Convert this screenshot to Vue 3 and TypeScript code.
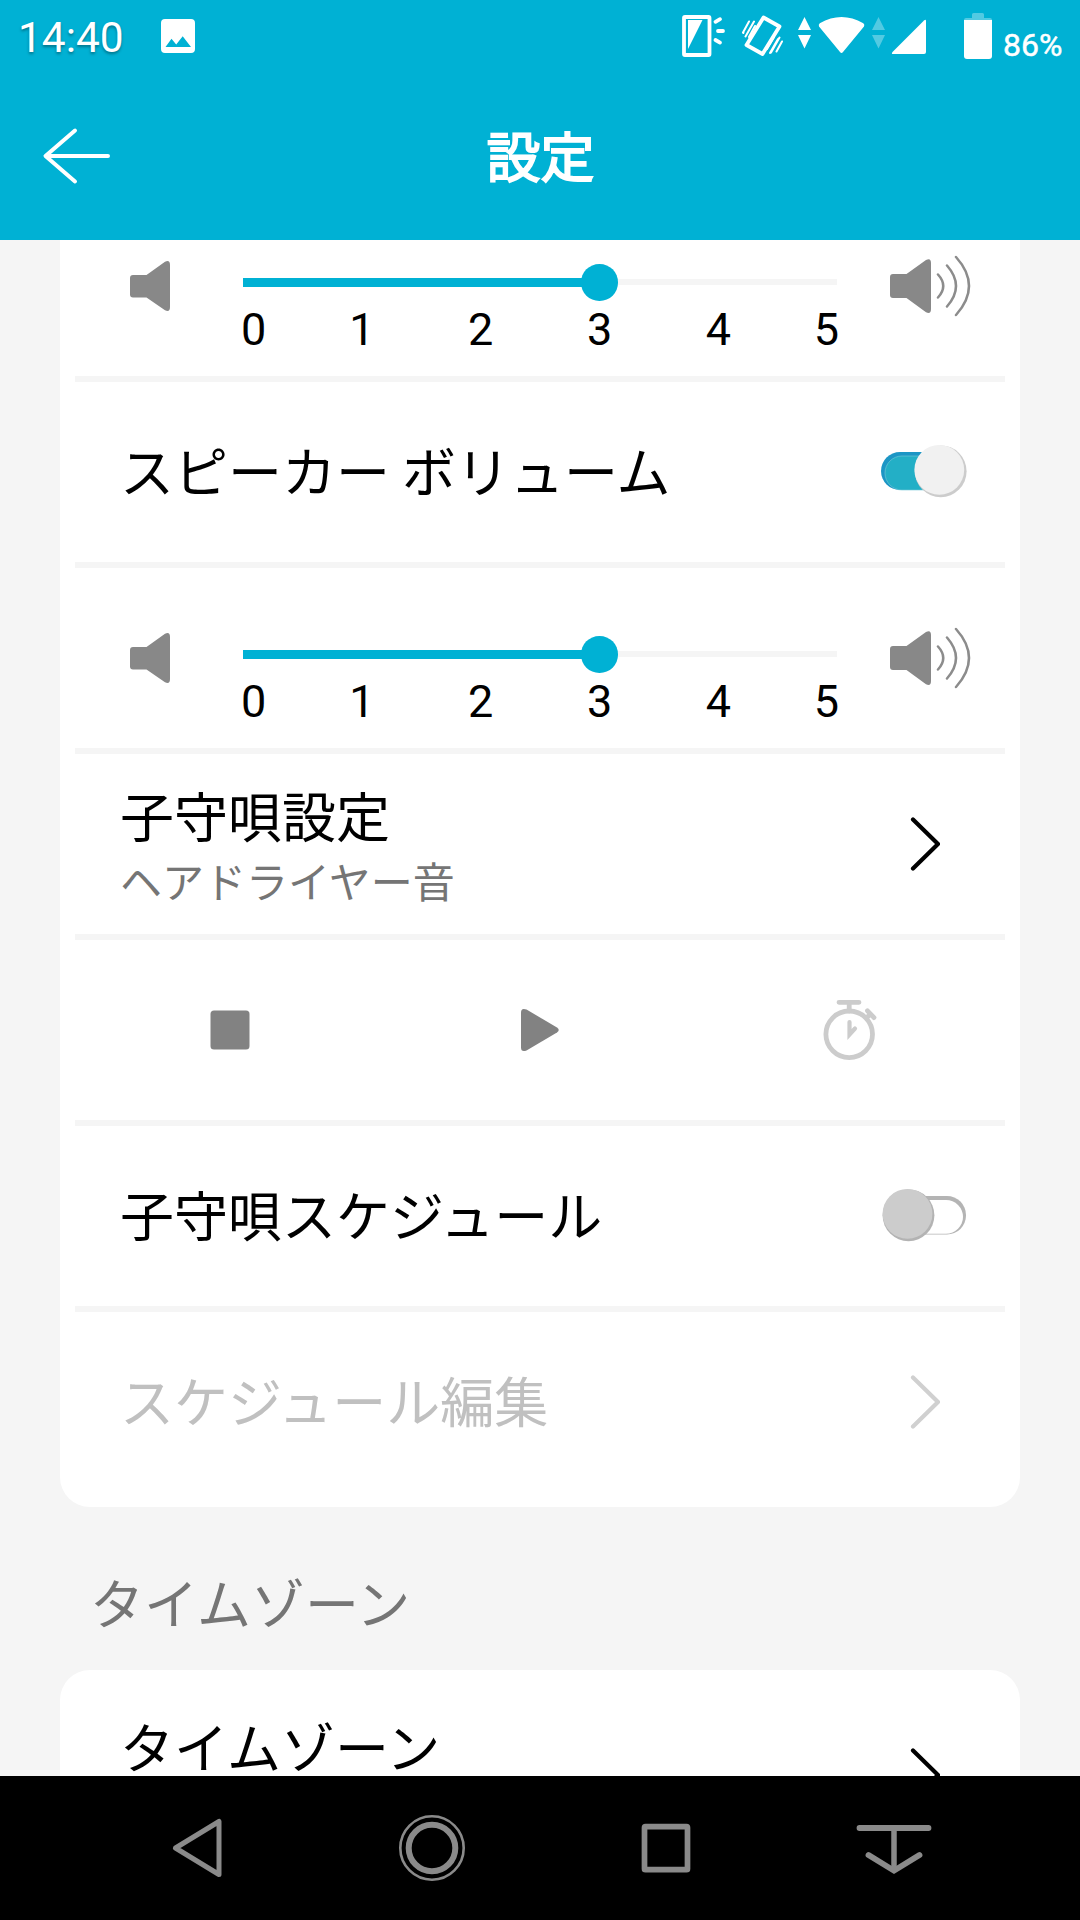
<script setup lang="ts">
import { ref } from 'vue'

const levels: number[] = [0, 1, 2, 3, 4, 5]
const cryVolume = ref<number>(3)
const speakerVolume = ref<number>(3)
const percent = (value: number): string => `${(value / 5) * 100}%`
</script>

<template>
  <div class="screen">
    <header class="top">
      <div class="status">
        <span class="clock">14:40</span>
        <svg class="photo" width="36" height="36" viewBox="160 18 36 36">
          <path fill="#fff" fill-rule="evenodd" d="M165 19h26q4 0 4 4v26q0 4-4 4h-26q-4 0-4-4V23q0-4 4-4zM165.500 47h25.500l-8.300-10.800-6.500 8.300-4.700-5.700z" />
        </svg>
        <svg class="indicators" width="320" height="60" viewBox="680 0 320 60" fill="#fff">
          <rect x="684" y="17" width="25.500" height="38" rx="1" fill="none" stroke="#fff" stroke-width="3.800" />
          <path d="M688 20h14.500L688 49z" />
          <path d="M715.500 21.800l4.500-2.600M718 31h5M715.500 40l4.500 2.600" fill="none" stroke="#fff" stroke-width="3.800" stroke-linecap="round" />
          <path d="M763.500 17.500L779.500 26.500 762.500 54 746.500 45z" fill="none" stroke="#fff" stroke-width="3.800" stroke-linejoin="round" />
          <path d="M743 32.500l6-11M745.500 36.500l8.500-15M771 52.500l8.500-15M776.500 51.500l5.500-10M743.300 33l.2-.4M770 53l8-14M749 37l6-11M767 49l7-12" fill="none" stroke="#fff" stroke-width="2" stroke-linecap="round" />
          <path d="M804.500 17l6.500 13h-13zM798 35h13l-6.500 13.500z" />
          <path d="M819.800 23.300Q841.500 10.800 863.300 23.300 865 24.500 864 26.500L843 52Q841.500 54 840 52L819 26.500Q818.200 24.500 819.800 23.300z" />
          <path opacity=".32" d="M878.500 17l6.500 13h-13zM872 35h13l-6.500 13.500z" />
          <path d="M924 20.500q2-1.500 2 .5v31q0 2-2 2h-31q-2 0-.5-2z" />
          <path opacity=".32" d="M972 18v-3.500q0-1.500 1.500-1.500h9q1.500 0 1.500 1.500V18h6q2 0 2 2h-28q0-2 2-2z" />
          <path d="M964 20h28v36q0 3-3 3h-22q-3 0-3-3z" />
        </svg>
        <span class="charge">86%</span>
      </div>
      <div class="bar">
        <svg class="back" width="76" height="60" viewBox="40 126 76 60" fill="none" stroke="#fff" stroke-width="4" stroke-linecap="round" stroke-linejoin="round">
          <path d="M75 130.500L45.500 156 75 181.500M46 156h62" />
        </svg>
        <h1>設定</h1>
        <span class="bar-end"></span>
      </div>
    </header>

    <main class="content">
      <section class="card first">
        <div class="row slider-row">
          <svg class="mute" width="40" height="50" viewBox="0 0 40 50" fill="#888">
            <path d="M3 14h13.500L35 .8Q40-1.500 40 4v42q0 5.500-5 3.200L16.500 36.500H3q-3 0-3-3V17q0-3 3-3z" />
          </svg>
          <div class="slider">
            <div class="track">
              <div class="fill" :style="{ width: percent(cryVolume) }"></div>
              <div class="thumb" :style="{ left: percent(cryVolume) }"></div>
            </div>
            <div class="ticks"><span v-for="n in levels" :key="n">{{ n }}</span></div>
          </div>
          <svg class="loud" width="82" height="62" viewBox="0 0 82 62" fill="none" stroke="#8c8c8c" stroke-width="2.500" stroke-linecap="round">
            <path fill="#888" stroke="none" d="M3 19h13.500L36 5Q41 2.500 41 8v46q0 5.500-5 3.200L16.500 43H3q-3 0-3-3V22q0-3 3-3z" />
            <path d="M48 19.500q10.500 11.500 0 23M57 10.500q18 20.500 0 41M66 2q26 29 0 58" />
          </svg>
        </div>

        <div class="row item">
          <span class="label">スピーカー ボリューム</span>
          <svg class="switch" width="86" height="54" viewBox="0 0 86 54">
            <rect x="0" y="8" width="80" height="38" rx="19" fill="#1c96c5" />
            <rect x="4" y="12" width="76" height="34" rx="17" fill="#23afc6" stroke="#78cbd9" stroke-width=".6" />
            <circle cx="59.700" cy="27.300" r="25.900" fill="#ccc" />
            <circle cx="58.300" cy="25.800" r="24.900" fill="#f1f1f1" />
          </svg>
        </div>

        <div class="row slider-row">
          <svg class="mute" width="40" height="50" viewBox="0 0 40 50" fill="#888">
            <path d="M3 14h13.500L35 .8Q40-1.500 40 4v42q0 5.500-5 3.200L16.500 36.500H3q-3 0-3-3V17q0-3 3-3z" />
          </svg>
          <div class="slider">
            <div class="track">
              <div class="fill" :style="{ width: percent(speakerVolume) }"></div>
              <div class="thumb" :style="{ left: percent(speakerVolume) }"></div>
            </div>
            <div class="ticks"><span v-for="n in levels" :key="n">{{ n }}</span></div>
          </div>
          <svg class="loud" width="82" height="62" viewBox="0 0 82 62" fill="none" stroke="#8c8c8c" stroke-width="2.500" stroke-linecap="round">
            <path fill="#888" stroke="none" d="M3 19h13.500L36 5Q41 2.500 41 8v46q0 5.500-5 3.200L16.500 43H3q-3 0-3-3V22q0-3 3-3z" />
            <path d="M48 19.500q10.500 11.500 0 23M57 10.500q18 20.500 0 41M66 2q26 29 0 58" />
          </svg>
        </div>

        <div class="row item">
          <div class="stack">
            <span class="label">子守唄設定</span>
            <span class="sub">ヘアドライヤー音</span>
          </div>
          <svg class="chevron" width="30" height="56" viewBox="0 0 30 56"><path d="M3 3.500L28 28 3 52.500" /></svg>
        </div>

        <div class="row player">
          <div class="cell">
            <svg width="40" height="40" viewBox="0 0 40 40"><rect x=".5" y=".5" width="39" height="39" rx="3.500" fill="#828282" /></svg>
          </div>
          <div class="cell">
            <svg width="38" height="44" viewBox="0 0 38 44"><path fill="#828282" d="M5.500 1.500L36 19.500q3.500 2.500 0 5L5.500 42.500Q0 44.500 0 39.500v-35Q0-.5 5.500 1.500z" /></svg>
          </div>
          <div class="cell">
            <svg width="54" height="64" viewBox="823 998 54 64" fill="none" stroke="#ccc" stroke-width="4.800" stroke-linecap="round">
              <circle cx="849.200" cy="1034.300" r="23.300" />
              <path d="M839 1002.300h20M849.200 1003v8M867.500 1010.800l6.500 6.800M866.500 1018l4-4" />
              <path d="M849.500 1022v12.500l5.500-6" stroke-width="4.200" />
            </svg>
          </div>
        </div>

        <div class="row item">
          <span class="label">子守唄スケジュール</span>
          <svg class="switch" width="86" height="54" viewBox="0 0 86 54">
            <rect x="10" y="8" width="75" height="38.500" rx="19" fill="#b4b4b4" />
            <rect x="8" y="12" width="74" height="33.800" rx="17" fill="#fff" />
            <circle cx="27.500" cy="27.300" r="25.900" fill="#b3b3b3" />
            <circle cx="26.500" cy="25.800" r="24.900" fill="#ccc" />
          </svg>
        </div>

        <div class="row item disabled">
          <span class="label">スケジュール編集</span>
          <svg class="chevron" width="30" height="56" viewBox="0 0 30 56"><path d="M3 3.500L28 28 3 52.500" /></svg>
        </div>
      </section>

      <h2>タイムゾーン</h2>

      <section class="card second">
        <div class="row item">
          <div class="stack">
            <span class="label">タイムゾーン</span>
          </div>
          <svg class="chevron" width="30" height="56" viewBox="0 0 30 56"><path d="M3 3.500L28 28 3 52.500" /></svg>
        </div>
      </section>
    </main>

    <nav class="nav">
      <svg width="80" height="80" viewBox="0 0 80 80"><path d="M61 13.500v53L17.500 40z" stroke-width="5" stroke-linejoin="round" /></svg>
      <svg width="80" height="80" viewBox="0 0 80 80"><circle cx="40" cy="40" r="31.700" stroke-width="2.600" /><circle cx="40" cy="40" r="23.300" stroke-width="6" /></svg>
      <svg width="80" height="80" viewBox="0 0 80 80"><rect x="18.500" y="18.700" width="43" height="43" rx="1" stroke-width="5.700" /></svg>
      <svg width="80" height="80" viewBox="0 0 80 80"><path d="M5.500 20h69M14.500 47L40 62.700 65.500 47" stroke-width="5.800" stroke-linecap="round" /><path d="M40 20v42" stroke-width="5.500" /></svg>
    </nav>
  </div>
</template>

<style>
body {
  background: #000;
}
</style>

<style scoped>
.screen {
  width: 1080px;
  height: 1920px;
  display: flex;
  flex-direction: column;
  overflow: hidden;
  background: #f5f5f5;
  color: #000;
  font-family: Roboto, "Noto Sans CJK JP", sans-serif;
}
svg {
  display: block;
  flex: none;
}
.top {
  flex: none;
  height: 240px;
  background: #00b1d4;
  color: #fff;
}
.status {
  height: 72px;
  display: flex;
  align-items: flex-start;
}
.clock {
  width: 142px;
  box-sizing: border-box;
  padding-left: 18px;
  font-size: 42.4px;
  line-height: 50px;
  padding-top: 13px;
  text-shadow: 0 2px 3px rgba(0, 0, 0, 0.35);
}
.photo {
  margin: 18px 0 0 18px;
}
.indicators {
  margin-left: 484px;
}
.charge {
  margin-left: 3px;
  padding-top: 25px;
  font-size: 32px;
  line-height: 40px;
  -webkit-text-stroke: 0.5px #fff;
}
.bar {
  height: 168px;
  display: flex;
  align-items: center;
  justify-content: space-between;
  padding: 0 40px;
}
.bar-end {
  width: 76px;
}
h1 {
  margin: 0;
  padding: 0 0 2px 1px;
  font-family: "Noto Sans CJK JP", sans-serif;
  font-size: 54px;
  line-height: 80px;
  font-weight: 400;
  -webkit-text-stroke: 1.8px #fff;
}
.content {
  flex: none;
  height: 1536px;
  overflow: hidden;
}
.card {
  margin: 0 60px;
  padding: 15px;
  background: #fff;
  border-radius: 30px;
}
.first {
  margin-top: -59px;
}
.row {
  height: 180px;
  display: flex;
}
.row + .row {
  border-top: 6px solid #f5f5f5;
}
.item {
  align-items: center;
  justify-content: space-between;
  padding-left: 45px;
}
.label {
  margin-bottom: 4px;
  font-family: "Noto Sans CJK JP", sans-serif;
  font-size: 54px;
  line-height: 78px;
  white-space: nowrap;
}
.stack {
  height: 136px;
  display: flex;
  flex-direction: column;
}
.stack .label {
  margin-bottom: -1px;
}
.sub {
  font-family: "Noto Sans CJK JP", sans-serif;
  font-size: 42px;
  line-height: 54px;
  color: #757575;
}
.switch {
  margin-right: 38px;
  margin-bottom: 2px;
}
.chevron {
  margin-right: 65px;
  fill: none;
  stroke: #000;
  stroke-width: 4.2;
  stroke-linecap: round;
  stroke-linejoin: round;
}
.disabled {
  color: #c0c0c0;
}
.disabled .chevron {
  stroke: #d0d0d0;
}
.slider-row {
  padding-left: 55px;
}
.mute {
  margin-top: 65px;
}
.slider {
  width: 599px;
  margin-left: 71px;
  padding-top: 83px;
}
.loud {
  margin: 59px 0 0 50px;
}
.track {
  position: relative;
  width: 594px;
  height: 6px;
  margin-left: 2px;
  background: #f5f5f5;
}
.fill {
  position: absolute;
  left: 0;
  top: -1px;
  height: 9px;
  background: #00b1d4;
}
.thumb {
  position: absolute;
  top: -14.8px;
  width: 36.6px;
  height: 36.6px;
  margin-left: -18.1px;
  border-radius: 50%;
  background: #00b1d4;
}
.ticks {
  display: flex;
  margin-top: 19px;
  font-size: 45px;
  line-height: 52px;
}
.ticks span {
  width: 118.9px;
  text-align: center;
}
.ticks span:first-child {
  width: 61.4px;
  text-align: left;
}
.ticks span:last-child {
  width: 61px;
  text-align: right;
}
.player {
  align-items: center;
}
.cell {
  flex: 1;
  display: flex;
  justify-content: center;
}
h2 {
  height: 163px;
  margin: 0;
  padding-left: 90px;
  font-family: "Noto Sans CJK JP", sans-serif;
  font-size: 54px;
  line-height: 190px;
  font-weight: 400;
  color: #757575;
}
.nav {
  flex: none;
  height: 144px;
  display: flex;
  align-items: center;
  gap: 154px;
  padding-left: 158px;
  background: #000;
  fill: none;
  stroke: #8a8a8a;
}
.nav svg:last-child {
  margin-left: -6px;
}
</style>
